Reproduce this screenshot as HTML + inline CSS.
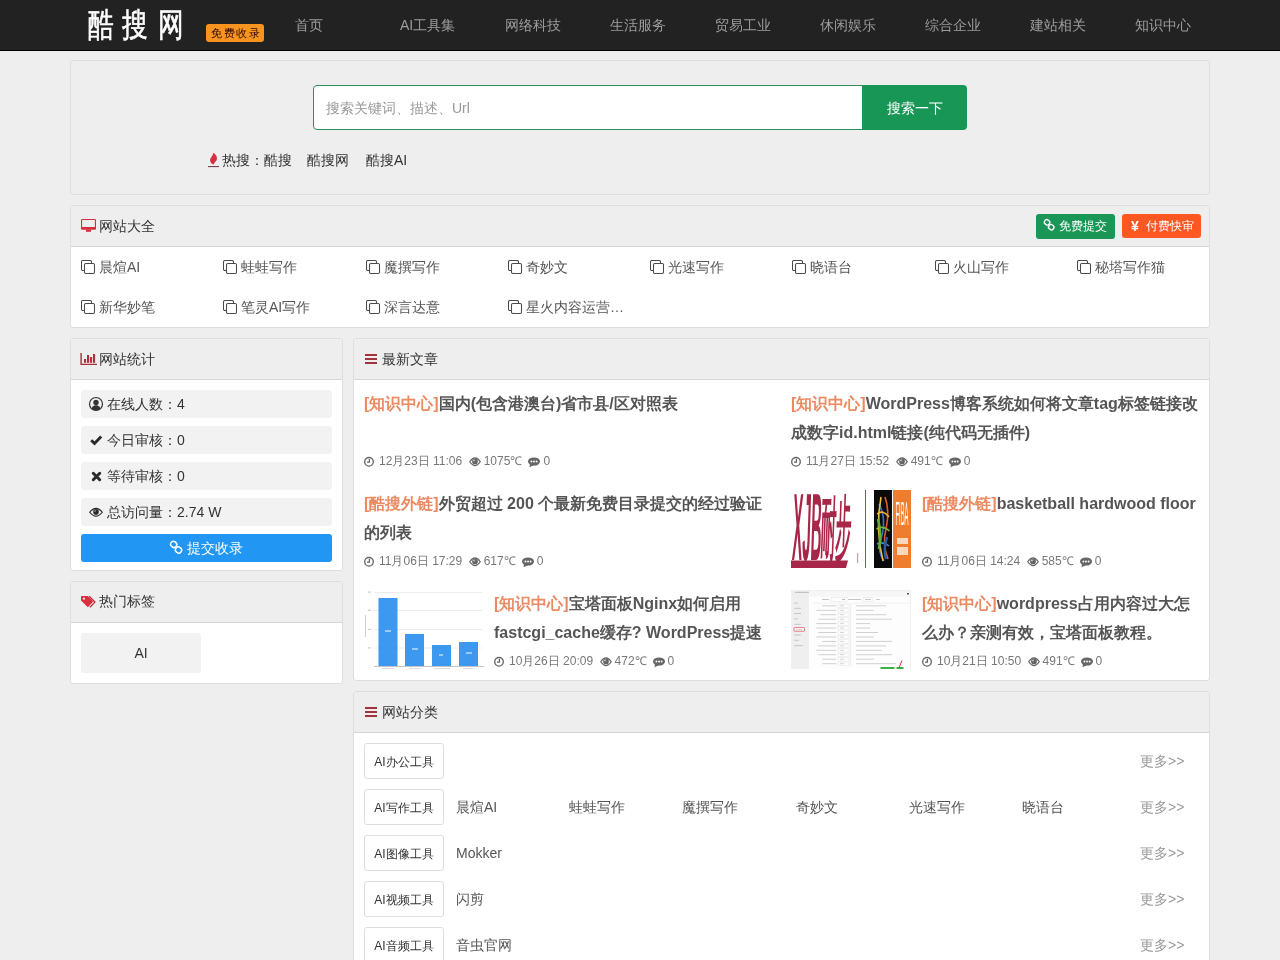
<!DOCTYPE html>
<html><head><meta charset="utf-8">
<style>
*{box-sizing:border-box;margin:0;padding:0}
html,body{width:1280px;height:960px;overflow:hidden}
body{background:#eee;font-family:"Liberation Sans",sans-serif;font-size:14px;color:#555;position:relative}
.a{position:absolute;white-space:nowrap}
.nav{position:absolute;left:0;top:0;width:1280px;height:51px;background:#222;border-bottom:1px solid #000}
.logo{top:4px;font-size:33px;line-height:41px;color:#fff;-webkit-text-stroke:.6px #fff;transform:scaleX(.78);transform-origin:0 0}
.badge{left:206px;top:24px;width:58px;height:18px;background:#f8931f;border-radius:3px;color:#2a0a00;font-size:11px;line-height:18px;padding-left:5px;letter-spacing:1.5px}
.ni{top:15px;line-height:20px;color:#9d9d9d;font-size:14px}
.panel{position:absolute;border:1px solid #ddd;border-radius:3px;background:#fff;overflow:hidden}
.ph{position:absolute;left:0;top:0;right:0;height:41px;background:#eee;border-bottom:1px solid #d6d6d6}
.pt{position:absolute;top:10px;line-height:20px;color:#333;font-size:14px}
.red{color:#d9333f}
.at{font-size:16px;line-height:29px;font-weight:bold;color:#555}
.tg{color:#ec8a62}
.meta{font-size:12px;line-height:20px;color:#777}
.mi{display:inline-block;vertical-align:top}
</style></head><body><div id="wrap" style="position:absolute;left:0;top:0;width:1280px;height:960px;will-change:transform">
<div class="nav"></div>
<div class="a logo" style="left:88px">酷</div><div class="a logo" style="left:122px">搜</div><div class="a logo" style="left:158px">网</div>
<div class="a badge">免费收录</div>
<div class="a ni" style="left:295px">首页</div>
<div class="a ni" style="left:400px">AI工具集</div>
<div class="a ni" style="left:505px">网络科技</div>
<div class="a ni" style="left:610px">生活服务</div>
<div class="a ni" style="left:715px">贸易工业</div>
<div class="a ni" style="left:820px">休闲娱乐</div>
<div class="a ni" style="left:925px">综合企业</div>
<div class="a ni" style="left:1030px">建站相关</div>
<div class="a ni" style="left:1135px">知识中心</div>

<!-- search -->
<div class="panel" style="left:70px;top:60px;width:1140px;height:135px;background:#eee"></div>
<div class="a" style="left:313px;top:85px;width:550px;height:45px;background:#fff;border:1px solid #2f8f5a;border-radius:4px 0 0 4px"></div>
<div class="a" style="left:326px;top:98px;line-height:20px;color:#999">搜索关键词、描述、Url</div>
<div class="a" style="left:862px;top:85px;width:105px;height:45px;background:#189656;border-radius:0 4px 4px 0;color:#fff;text-align:center;line-height:47px">搜索一下</div>
<div class="a" style="left:222px;top:150px;line-height:20px;color:#333">热搜：酷搜</div>
<div class="a" style="left:307px;top:150px;line-height:20px;color:#333">酷搜网</div>
<div class="a" style="left:366px;top:150px;line-height:20px;color:#333">酷搜AI</div>


<!-- site list panel -->
<div class="panel" style="left:70px;top:205px;width:1140px;height:123px"><div class="ph"></div></div>
<svg class="a" style="left:81px;top:219px" width="15" height="13" viewBox="0 0 15 13"><path fill-rule="evenodd" d="M1.2 0H13.8A1.2 1.2 0 0 1 15 1.2V9.5A1.2 1.2 0 0 1 13.8 10.7H1.2A1.2 1.2 0 0 1 0 9.5V1.2A1.2 1.2 0 0 1 1.2 0ZM1.1 1.1V8H13.9V1.1Z" fill="#d42f3f"/><rect x="5" y="10.5" width="5" height="2.3" fill="#d42f3f"/></svg>
<div class="a pt" style="left:99px;top:216px">网站大全</div>
<div class="a" style="left:1036px;top:214px;width:79px;height:25px;background:#1a9656;border-radius:3px;color:#fff;font-size:12px;line-height:25px;padding-left:23px">免费提交</div>
<div class="a" style="left:1122px;top:214px;width:79px;height:24px;background:#ff5722;border-radius:3px;color:#fff;font-size:12px;line-height:24px;padding-left:24px">付费快审</div>
<div class="a" style="left:1131px;top:214px;line-height:24px;color:#fff;font-size:14px;font-weight:bold">¥</div>

<svg class="a" style="left:81px;top:260px" width="15" height="15" viewBox="0 0 15 15"><path d="M3.5 10.5H1.8A1.3 1.3 0 0 1 .5 9.2V1.8A1.3 1.3 0 0 1 1.8 .5H9.2A1.3 1.3 0 0 1 10.5 1.8V3.5" fill="none" stroke="#4a4a4a" stroke-width="1.05"/><rect x="3.5" y="3.5" width="10" height="10" rx="1.3" fill="none" stroke="#4a4a4a" stroke-width="1.05"/></svg>
<div class="a" style="left:99px;top:257px;line-height:20px;color:#555">晨煊AI</div>
<svg class="a" style="left:223px;top:260px" width="15" height="15" viewBox="0 0 15 15"><path d="M3.5 10.5H1.8A1.3 1.3 0 0 1 .5 9.2V1.8A1.3 1.3 0 0 1 1.8 .5H9.2A1.3 1.3 0 0 1 10.5 1.8V3.5" fill="none" stroke="#4a4a4a" stroke-width="1.05"/><rect x="3.5" y="3.5" width="10" height="10" rx="1.3" fill="none" stroke="#4a4a4a" stroke-width="1.05"/></svg>
<div class="a" style="left:241px;top:257px;line-height:20px;color:#555">蛙蛙写作</div>
<svg class="a" style="left:366px;top:260px" width="15" height="15" viewBox="0 0 15 15"><path d="M3.5 10.5H1.8A1.3 1.3 0 0 1 .5 9.2V1.8A1.3 1.3 0 0 1 1.8 .5H9.2A1.3 1.3 0 0 1 10.5 1.8V3.5" fill="none" stroke="#4a4a4a" stroke-width="1.05"/><rect x="3.5" y="3.5" width="10" height="10" rx="1.3" fill="none" stroke="#4a4a4a" stroke-width="1.05"/></svg>
<div class="a" style="left:384px;top:257px;line-height:20px;color:#555">魔撰写作</div>
<svg class="a" style="left:508px;top:260px" width="15" height="15" viewBox="0 0 15 15"><path d="M3.5 10.5H1.8A1.3 1.3 0 0 1 .5 9.2V1.8A1.3 1.3 0 0 1 1.8 .5H9.2A1.3 1.3 0 0 1 10.5 1.8V3.5" fill="none" stroke="#4a4a4a" stroke-width="1.05"/><rect x="3.5" y="3.5" width="10" height="10" rx="1.3" fill="none" stroke="#4a4a4a" stroke-width="1.05"/></svg>
<div class="a" style="left:526px;top:257px;line-height:20px;color:#555">奇妙文</div>
<svg class="a" style="left:650px;top:260px" width="15" height="15" viewBox="0 0 15 15"><path d="M3.5 10.5H1.8A1.3 1.3 0 0 1 .5 9.2V1.8A1.3 1.3 0 0 1 1.8 .5H9.2A1.3 1.3 0 0 1 10.5 1.8V3.5" fill="none" stroke="#4a4a4a" stroke-width="1.05"/><rect x="3.5" y="3.5" width="10" height="10" rx="1.3" fill="none" stroke="#4a4a4a" stroke-width="1.05"/></svg>
<div class="a" style="left:668px;top:257px;line-height:20px;color:#555">光速写作</div>
<svg class="a" style="left:792px;top:260px" width="15" height="15" viewBox="0 0 15 15"><path d="M3.5 10.5H1.8A1.3 1.3 0 0 1 .5 9.2V1.8A1.3 1.3 0 0 1 1.8 .5H9.2A1.3 1.3 0 0 1 10.5 1.8V3.5" fill="none" stroke="#4a4a4a" stroke-width="1.05"/><rect x="3.5" y="3.5" width="10" height="10" rx="1.3" fill="none" stroke="#4a4a4a" stroke-width="1.05"/></svg>
<div class="a" style="left:810px;top:257px;line-height:20px;color:#555">晓语台</div>
<svg class="a" style="left:935px;top:260px" width="15" height="15" viewBox="0 0 15 15"><path d="M3.5 10.5H1.8A1.3 1.3 0 0 1 .5 9.2V1.8A1.3 1.3 0 0 1 1.8 .5H9.2A1.3 1.3 0 0 1 10.5 1.8V3.5" fill="none" stroke="#4a4a4a" stroke-width="1.05"/><rect x="3.5" y="3.5" width="10" height="10" rx="1.3" fill="none" stroke="#4a4a4a" stroke-width="1.05"/></svg>
<div class="a" style="left:953px;top:257px;line-height:20px;color:#555">火山写作</div>
<svg class="a" style="left:1077px;top:260px" width="15" height="15" viewBox="0 0 15 15"><path d="M3.5 10.5H1.8A1.3 1.3 0 0 1 .5 9.2V1.8A1.3 1.3 0 0 1 1.8 .5H9.2A1.3 1.3 0 0 1 10.5 1.8V3.5" fill="none" stroke="#4a4a4a" stroke-width="1.05"/><rect x="3.5" y="3.5" width="10" height="10" rx="1.3" fill="none" stroke="#4a4a4a" stroke-width="1.05"/></svg>
<div class="a" style="left:1095px;top:257px;line-height:20px;color:#555">秘塔写作猫</div>
<svg class="a" style="left:81px;top:300px" width="15" height="15" viewBox="0 0 15 15"><path d="M3.5 10.5H1.8A1.3 1.3 0 0 1 .5 9.2V1.8A1.3 1.3 0 0 1 1.8 .5H9.2A1.3 1.3 0 0 1 10.5 1.8V3.5" fill="none" stroke="#4a4a4a" stroke-width="1.05"/><rect x="3.5" y="3.5" width="10" height="10" rx="1.3" fill="none" stroke="#4a4a4a" stroke-width="1.05"/></svg>
<div class="a" style="left:99px;top:297px;line-height:20px;color:#555">新华妙笔</div>
<svg class="a" style="left:223px;top:300px" width="15" height="15" viewBox="0 0 15 15"><path d="M3.5 10.5H1.8A1.3 1.3 0 0 1 .5 9.2V1.8A1.3 1.3 0 0 1 1.8 .5H9.2A1.3 1.3 0 0 1 10.5 1.8V3.5" fill="none" stroke="#4a4a4a" stroke-width="1.05"/><rect x="3.5" y="3.5" width="10" height="10" rx="1.3" fill="none" stroke="#4a4a4a" stroke-width="1.05"/></svg>
<div class="a" style="left:241px;top:297px;line-height:20px;color:#555">笔灵AI写作</div>
<svg class="a" style="left:366px;top:300px" width="15" height="15" viewBox="0 0 15 15"><path d="M3.5 10.5H1.8A1.3 1.3 0 0 1 .5 9.2V1.8A1.3 1.3 0 0 1 1.8 .5H9.2A1.3 1.3 0 0 1 10.5 1.8V3.5" fill="none" stroke="#4a4a4a" stroke-width="1.05"/><rect x="3.5" y="3.5" width="10" height="10" rx="1.3" fill="none" stroke="#4a4a4a" stroke-width="1.05"/></svg>
<div class="a" style="left:384px;top:297px;line-height:20px;color:#555">深言达意</div>
<svg class="a" style="left:508px;top:300px" width="15" height="15" viewBox="0 0 15 15"><path d="M3.5 10.5H1.8A1.3 1.3 0 0 1 .5 9.2V1.8A1.3 1.3 0 0 1 1.8 .5H9.2A1.3 1.3 0 0 1 10.5 1.8V3.5" fill="none" stroke="#4a4a4a" stroke-width="1.05"/><rect x="3.5" y="3.5" width="10" height="10" rx="1.3" fill="none" stroke="#4a4a4a" stroke-width="1.05"/></svg>
<div class="a" style="left:526px;top:297px;line-height:20px;color:#555">星火内容运营…</div>

<!-- stats panel -->
<div class="panel" style="left:70px;top:338px;width:273px;height:233px"><div class="ph"></div></div>
<div class="a pt" style="left:99px;top:349px">网站统计</div>
<div class="a" style="left:81px;top:390px;width:251px;height:28px;background:#f2f2f2;border-radius:3px"></div>
<div class="a" style="left:81px;top:426px;width:251px;height:28px;background:#f2f2f2;border-radius:3px"></div>
<div class="a" style="left:81px;top:462px;width:251px;height:28px;background:#f2f2f2;border-radius:3px"></div>
<div class="a" style="left:81px;top:498px;width:251px;height:28px;background:#f2f2f2;border-radius:3px"></div>
<div class="a" style="left:107px;top:394px;line-height:20px;color:#333">在线人数：4</div>
<div class="a" style="left:107px;top:430px;line-height:20px;color:#333">今日审核：0</div>
<div class="a" style="left:107px;top:466px;line-height:20px;color:#333">等待审核：0</div>
<div class="a" style="left:107px;top:502px;line-height:20px;color:#333">总访问量：2.74 W</div>
<div class="a" style="left:81px;top:534px;width:251px;height:28px;background:#2196f3;border-radius:3px;color:#fff;line-height:28px;padding-left:106px">提交收录</div>

<!-- tags panel -->
<div class="panel" style="left:70px;top:581px;width:273px;height:103px"><div class="ph"></div></div>
<div class="a pt" style="left:99px;top:591px">热门标签</div>
<div class="a" style="left:81px;top:633px;width:120px;height:40px;background:#f2f2f2;border-radius:3px;text-align:center;line-height:40px;color:#333">AI</div>

<!-- articles panel -->
<div class="panel" style="left:353px;top:338px;width:857px;height:343px"><div class="ph"></div></div>
<div class="a pt" style="left:382px;top:349px">最新文章</div>


<div class="a at" style="left:364px;top:389px"><span class="tg">[知识中心]</span>国内(包含港澳台)省市县/区对照表</div>
<div class="a meta" style="left:364px;top:451px"><svg class="mi" width="10" height="20" viewBox="0 0 10 20" style="margin-right:5px"><circle cx="5" cy="10.75" r="4.3" fill="none" stroke="#666" stroke-width="1.35"/><path d="M5.4 8V11.2H3" fill="none" stroke="#666" stroke-width="1.3"/></svg>12月23日 11:06<svg class="mi" width="12" height="20" viewBox="0 0 12 20" style="margin-left:6.5px;margin-right:3px"><path d="M.7 10.75Q6 3 11.3 10.75Q6 18.5 .7 10.75Z" fill="none" stroke="#666" stroke-width="1.2"/><circle cx="6" cy="10.4" r="2.9" fill="#666"/><circle cx="5" cy="9.4" r=".9" fill="#ccc"/></svg>1075℃<svg class="mi" width="12" height="20" viewBox="0 0 12 20" style="margin-left:6px;margin-right:3px"><ellipse cx="6" cy="10.5" rx="6" ry="4.1" fill="#666"/><path d="M2 13L1.5 16.3L5.8 14.3Z" fill="#666"/><circle cx="3.4" cy="10.5" r=".95" fill="#fff"/><circle cx="6" cy="10.5" r=".95" fill="#fff"/><circle cx="8.6" cy="10.5" r=".95" fill="#fff"/></svg>0</div>
<div class="a at" style="left:791px;top:389px"><span class="tg">[知识中心]</span>WordPress博客系统如何将文章tag标签链接改<br>成数字id.html链接(纯代码无插件)</div>
<div class="a meta" style="left:791px;top:451px"><svg class="mi" width="10" height="20" viewBox="0 0 10 20" style="margin-right:5px"><circle cx="5" cy="10.75" r="4.3" fill="none" stroke="#666" stroke-width="1.35"/><path d="M5.4 8V11.2H3" fill="none" stroke="#666" stroke-width="1.3"/></svg>11月27日 15:52<svg class="mi" width="12" height="20" viewBox="0 0 12 20" style="margin-left:6.5px;margin-right:3px"><path d="M.7 10.75Q6 3 11.3 10.75Q6 18.5 .7 10.75Z" fill="none" stroke="#666" stroke-width="1.2"/><circle cx="6" cy="10.4" r="2.9" fill="#666"/><circle cx="5" cy="9.4" r=".9" fill="#ccc"/></svg>491℃<svg class="mi" width="12" height="20" viewBox="0 0 12 20" style="margin-left:6px;margin-right:3px"><ellipse cx="6" cy="10.5" rx="6" ry="4.1" fill="#666"/><path d="M2 13L1.5 16.3L5.8 14.3Z" fill="#666"/><circle cx="3.4" cy="10.5" r=".95" fill="#fff"/><circle cx="6" cy="10.5" r=".95" fill="#fff"/><circle cx="8.6" cy="10.5" r=".95" fill="#fff"/></svg>0</div>
<div class="a at" style="left:364px;top:489px"><span class="tg">[酷搜外链]</span>外贸超过 200 个最新免费目录提交的经过验证<br>的列表</div>
<div class="a meta" style="left:364px;top:551px"><svg class="mi" width="10" height="20" viewBox="0 0 10 20" style="margin-right:5px"><circle cx="5" cy="10.75" r="4.3" fill="none" stroke="#666" stroke-width="1.35"/><path d="M5.4 8V11.2H3" fill="none" stroke="#666" stroke-width="1.3"/></svg>11月06日 17:29<svg class="mi" width="12" height="20" viewBox="0 0 12 20" style="margin-left:6.5px;margin-right:3px"><path d="M.7 10.75Q6 3 11.3 10.75Q6 18.5 .7 10.75Z" fill="none" stroke="#666" stroke-width="1.2"/><circle cx="6" cy="10.4" r="2.9" fill="#666"/><circle cx="5" cy="9.4" r=".9" fill="#ccc"/></svg>617℃<svg class="mi" width="12" height="20" viewBox="0 0 12 20" style="margin-left:6px;margin-right:3px"><ellipse cx="6" cy="10.5" rx="6" ry="4.1" fill="#666"/><path d="M2 13L1.5 16.3L5.8 14.3Z" fill="#666"/><circle cx="3.4" cy="10.5" r=".95" fill="#fff"/><circle cx="6" cy="10.5" r=".95" fill="#fff"/><circle cx="8.6" cy="10.5" r=".95" fill="#fff"/></svg>0</div>
<svg class="a" style="left:791px;top:489px" width="120" height="80" viewBox="0 0 120 80">
<rect width="120" height="80" fill="#fff"/>
<g fill="#a82748">
<text x="3" y="21.6" transform="scale(1,3.3) skewX(-6)" font-family="Liberation Sans" font-weight="bold" font-size="29" textLength="29" lengthAdjust="spacingAndGlyphs">XJB</text>
<text x="31" y="21.6" transform="scale(1,2.9) skewX(-6)" font-family="Liberation Sans" font-weight="bold" font-size="24" textLength="31" lengthAdjust="spacingAndGlyphs">耐步</text>
<path d="M0 71.5H57L55 79H0Z"/>
</g>
<rect x="74" y="1" width="1" height="78" fill="#9a4a5a"/>
<rect x="66" y="64" width="1.2" height="10" fill="#c8a0aa"/>
<rect x="83" y="1" width="18" height="78" fill="#0a0a0a"/>
<rect x="102" y="1" width="18" height="78" fill="#ef7d2d"/>
<g fill="none" stroke-width="1.6">
<path d="M88 15Q96 30 90 50Q86 62 93 72" stroke="#3a70c0"/>
<path d="M94 8Q99 22 95 40Q91 55 97 70" stroke="#e05a30"/>
<path d="M86 25Q92 20 98 28" stroke="#f0b030"/>
<path d="M85.5 40Q92 36 98.5 42" stroke="#70b840"/>
<path d="M86 55Q92 52 98 57" stroke="#3a8ad0"/>
<path d="M90 8Q84 40 92 72" stroke="#e8c040"/>
<path d="M87 30Q91 45 88 60" stroke="#60b040" stroke-width="2.5"/>
<path d="M96 48Q92 60 95 70" stroke="#2a5aa0" stroke-width="2.5"/>
</g>
<g fill="#fff">
<text x="104.5" y="9" transform="scale(1,4)" font-family="Liberation Sans" font-size="8.5" textLength="13" lengthAdjust="spacingAndGlyphs">FIBA</text>
<rect x="106" y="49" width="11" height="6" fill-opacity=".7"/><rect x="106" y="58" width="11" height="8" fill-opacity=".7"/>
</g>
</svg>
<div class="a at" style="left:922px;top:489px"><span class="tg">[酷搜外链]</span>basketball hardwood floor</div>
<div class="a meta" style="left:922px;top:551px"><svg class="mi" width="10" height="20" viewBox="0 0 10 20" style="margin-right:5px"><circle cx="5" cy="10.75" r="4.3" fill="none" stroke="#666" stroke-width="1.35"/><path d="M5.4 8V11.2H3" fill="none" stroke="#666" stroke-width="1.3"/></svg>11月06日 14:24<svg class="mi" width="12" height="20" viewBox="0 0 12 20" style="margin-left:6.5px;margin-right:3px"><path d="M.7 10.75Q6 3 11.3 10.75Q6 18.5 .7 10.75Z" fill="none" stroke="#666" stroke-width="1.2"/><circle cx="6" cy="10.4" r="2.9" fill="#666"/><circle cx="5" cy="9.4" r=".9" fill="#ccc"/></svg>585℃<svg class="mi" width="12" height="20" viewBox="0 0 12 20" style="margin-left:6px;margin-right:3px"><ellipse cx="6" cy="10.5" rx="6" ry="4.1" fill="#666"/><path d="M2 13L1.5 16.3L5.8 14.3Z" fill="#666"/><circle cx="3.4" cy="10.5" r=".95" fill="#fff"/><circle cx="6" cy="10.5" r=".95" fill="#fff"/><circle cx="8.6" cy="10.5" r=".95" fill="#fff"/></svg>0</div>
<svg class="a" style="left:364px;top:589px" width="120" height="80" viewBox="0 0 120 80">
<rect width="120" height="80" fill="#fff"/>
<g stroke="#ededed" stroke-width="1"><path d="M10 3.5H118M10 21.5H118M10 40.5H118M10 59H118"/></g>
<g fill="#d0d0d0"><rect x="4" y="2.5" width="3" height="1.2"/><rect x="4" y="20.8" width="3" height="1.2"/><rect x="4" y="39.8" width="3" height="1.2"/><rect x="4" y="58.3" width="3" height="1.2"/><rect x="1" y="26" width="1" height="22"/></g>
<g fill="#3d98f0"><rect x="14.5" y="9" width="19" height="68.5"/><rect x="41" y="45" width="19" height="32.5"/><rect x="68" y="56" width="19" height="21.5"/><rect x="95" y="53" width="19" height="24.5"/></g>
<g fill="#9ccaf8"><rect x="21" y="41" width="6" height="2"/><rect x="48" y="59" width="6" height="2"/><rect x="75" y="65" width="4" height="2"/><rect x="102" y="63" width="6" height="2"/></g>
<rect x="10" y="77" width="110" height="1" fill="#c4c4c4"/>
<g fill="#dcdcdc"><rect x="18" y="79" width="12" height="1"/><rect x="45" y="79" width="12" height="1"/><rect x="70" y="79" width="16" height="1"/><rect x="99" y="79" width="10" height="1"/></g>
</svg>
<div class="a at" style="left:494px;top:589px"><span class="tg">[知识中心]</span>宝塔面板Nginx如何启用<br>fastcgi_cache缓存? WordPress提速</div>
<div class="a meta" style="left:494px;top:651px"><svg class="mi" width="10" height="20" viewBox="0 0 10 20" style="margin-right:5px"><circle cx="5" cy="10.75" r="4.3" fill="none" stroke="#666" stroke-width="1.35"/><path d="M5.4 8V11.2H3" fill="none" stroke="#666" stroke-width="1.3"/></svg>10月26日 20:09<svg class="mi" width="12" height="20" viewBox="0 0 12 20" style="margin-left:6.5px;margin-right:3px"><path d="M.7 10.75Q6 3 11.3 10.75Q6 18.5 .7 10.75Z" fill="none" stroke="#666" stroke-width="1.2"/><circle cx="6" cy="10.4" r="2.9" fill="#666"/><circle cx="5" cy="9.4" r=".9" fill="#ccc"/></svg>472℃<svg class="mi" width="12" height="20" viewBox="0 0 12 20" style="margin-left:6px;margin-right:3px"><ellipse cx="6" cy="10.5" rx="6" ry="4.1" fill="#666"/><path d="M2 13L1.5 16.3L5.8 14.3Z" fill="#666"/><circle cx="3.4" cy="10.5" r=".95" fill="#fff"/><circle cx="6" cy="10.5" r=".95" fill="#fff"/><circle cx="8.6" cy="10.5" r=".95" fill="#fff"/></svg>0</div>
<svg class="a" style="left:791px;top:589px" width="120" height="80" viewBox="0 0 120 80">
<rect width="120" height="80" fill="#fff"/>
<rect x="0.5" y="1" width="119" height="79" fill="#fdfdfd"/>
<rect x="0.5" y="1" width="119" height=".6" fill="#e6e6e6"/>
<rect x="119" y="1" width=".8" height="79" fill="#ececec"/>
<rect x="0" y="1" width="18" height="79" fill="#efefef"/>
<rect x="18" y="1.6" width="101" height="6" fill="#f6f6f6"/>
<rect x="4" y="2.8" width="14" height="1.1" fill="#bdbdbd"/>
<g fill="#c6c6c6"><rect x="3" y="13.5" width="4" height="1"/><rect x="3" y="18.8" width="7" height="1"/><rect x="3" y="24" width="7" height="1"/><rect x="3" y="29.4" width="4" height="1"/><rect x="3" y="34.8" width="7" height="1"/><rect x="3" y="45.5" width="7" height="1"/><rect x="3" y="50.8" width="5" height="1"/><rect x="3" y="56.2" width="9" height="1"/></g>
<rect x="3" y="38.6" width="10.5" height="3.6" rx=".8" fill="#fff" stroke="#d8505a" stroke-width=".8"/>
<rect x="5" y="40" width="6" height=".8" fill="#c8c8c8"/>
<rect x="31" y="10" width="7" height="1" fill="#c4c4c4"/><rect x="40" y="8.4" width="16" height="4" fill="none" stroke="#e0e0e0" stroke-width=".5"/><rect x="51" y="10" width="3" height="1" fill="#bbb"/><rect x="57" y="10" width="13" height="1" fill="#c4c4c4"/><rect x="72" y="8.4" width="10" height="4" fill="none" stroke="#e0e0e0" stroke-width=".5"/><rect x="74" y="10" width="6" height="1" fill="#c8c8c8"/><rect x="85" y="10" width="4" height="1" fill="#c8c8c8"/>
<rect x="22" y="13.8" width="97" height=".5" fill="#e8e8e8"/>
<rect x="59.5" y="15" width=".6" height="62" fill="#e2e2e2"/>
<rect x="31.3" y="16.3" width="14" height="1" fill="#cfcfcf"/><rect x="47" y="15.2" width="11" height="3.4" fill="none" stroke="#e4e4e4" stroke-width=".5"/><rect x="49" y="16.3" width="4" height="1" fill="#d5d5d5"/><rect x="65" y="16.3" width="30" height="1" fill="#d0d0d0"/><rect x="25.3" y="20.8" width="20" height="1" fill="#cfcfcf"/><rect x="47" y="19.6" width="11" height="3.4" fill="none" stroke="#e4e4e4" stroke-width=".5"/><rect x="49" y="20.8" width="4" height="1" fill="#d5d5d5"/><rect x="65" y="20.8" width="18" height="1" fill="#d0d0d0"/><rect x="29.3" y="25.2" width="16" height="1" fill="#cfcfcf"/><rect x="47" y="24.1" width="11" height="3.4" fill="none" stroke="#e4e4e4" stroke-width=".5"/><rect x="49" y="25.2" width="4" height="1" fill="#d5d5d5"/><rect x="65" y="25.2" width="30" height="1" fill="#d0d0d0"/><rect x="27.3" y="29.7" width="18" height="1" fill="#cfcfcf"/><rect x="47" y="28.6" width="11" height="3.4" fill="none" stroke="#e4e4e4" stroke-width=".5"/><rect x="49" y="29.7" width="4" height="1" fill="#d5d5d5"/><rect x="65" y="29.7" width="36" height="1" fill="#d0d0d0"/><rect x="25.3" y="34.1" width="20" height="1" fill="#cfcfcf"/><rect x="47" y="33.0" width="11" height="3.4" fill="none" stroke="#e4e4e4" stroke-width=".5"/><rect x="49" y="34.1" width="4" height="1" fill="#d5d5d5"/><rect x="65" y="34.1" width="14" height="1" fill="#d0d0d0"/><rect x="25.3" y="38.5" width="20" height="1" fill="#cfcfcf"/><rect x="47" y="37.4" width="11" height="3.4" fill="none" stroke="#e4e4e4" stroke-width=".5"/><rect x="49" y="38.5" width="4" height="1" fill="#d5d5d5"/><rect x="65" y="38.5" width="14" height="1" fill="#d0d0d0"/><rect x="27.3" y="43.0" width="18" height="1" fill="#cfcfcf"/><rect x="47" y="41.9" width="11" height="3.4" fill="none" stroke="#e4e4e4" stroke-width=".5"/><rect x="49" y="43.0" width="4" height="1" fill="#d5d5d5"/><rect x="65" y="43.0" width="22" height="1" fill="#d0d0d0"/><rect x="25.3" y="47.5" width="20" height="1" fill="#cfcfcf"/><rect x="47" y="46.4" width="11" height="3.4" fill="none" stroke="#e4e4e4" stroke-width=".5"/><rect x="49" y="47.5" width="4" height="1" fill="#d5d5d5"/><rect x="65" y="47.5" width="18" height="1" fill="#d0d0d0"/><rect x="31.3" y="51.9" width="14" height="1" fill="#cfcfcf"/><rect x="47" y="50.8" width="11" height="3.4" fill="none" stroke="#e4e4e4" stroke-width=".5"/><rect x="49" y="51.9" width="4" height="1" fill="#d5d5d5"/><rect x="65" y="51.9" width="36" height="1" fill="#d0d0d0"/><rect x="27.3" y="56.4" width="18" height="1" fill="#cfcfcf"/><rect x="47" y="55.3" width="11" height="3.4" fill="none" stroke="#e4e4e4" stroke-width=".5"/><rect x="49" y="56.4" width="4" height="1" fill="#d5d5d5"/><rect x="65" y="56.4" width="30" height="1" fill="#d0d0d0"/><rect x="25.3" y="60.8" width="20" height="1" fill="#cfcfcf"/><rect x="47" y="59.7" width="11" height="3.4" fill="none" stroke="#e4e4e4" stroke-width=".5"/><rect x="49" y="60.8" width="4" height="1" fill="#d5d5d5"/><rect x="65" y="60.8" width="26" height="1" fill="#d0d0d0"/><rect x="27.3" y="65.2" width="18" height="1" fill="#cfcfcf"/><rect x="47" y="64.2" width="11" height="3.4" fill="none" stroke="#e4e4e4" stroke-width=".5"/><rect x="49" y="65.2" width="4" height="1" fill="#d5d5d5"/><rect x="65" y="65.2" width="36" height="1" fill="#d0d0d0"/><rect x="31.3" y="69.7" width="14" height="1" fill="#cfcfcf"/><rect x="47" y="68.6" width="11" height="3.4" fill="none" stroke="#e4e4e4" stroke-width=".5"/><rect x="49" y="69.7" width="4" height="1" fill="#d5d5d5"/><rect x="65" y="69.7" width="18" height="1" fill="#d0d0d0"/><rect x="31.3" y="74.2" width="14" height="1" fill="#cfcfcf"/><rect x="47" y="73.1" width="11" height="3.4" fill="none" stroke="#e4e4e4" stroke-width=".5"/><rect x="49" y="74.2" width="4" height="1" fill="#d5d5d5"/><rect x="65" y="74.2" width="40" height="1" fill="#d0d0d0"/>
<rect x="89.5" y="78" width="14" height="2" fill="#3cb043"/><rect x="105.5" y="78" width="7" height="2" fill="#3cb043"/>
<path d="M108 79L111 71.5" stroke="#d8303a" stroke-width="1"/>
<rect x="116" y="4" width="2" height="1.5" fill="#555"/>
</svg>
<div class="a at" style="left:922px;top:589px"><span class="tg">[知识中心]</span>wordpress占用内容过大怎<br>么办？亲测有效，宝塔面板教程。</div>
<div class="a meta" style="left:922px;top:651px"><svg class="mi" width="10" height="20" viewBox="0 0 10 20" style="margin-right:5px"><circle cx="5" cy="10.75" r="4.3" fill="none" stroke="#666" stroke-width="1.35"/><path d="M5.4 8V11.2H3" fill="none" stroke="#666" stroke-width="1.3"/></svg>10月21日 10:50<svg class="mi" width="12" height="20" viewBox="0 0 12 20" style="margin-left:6.5px;margin-right:3px"><path d="M.7 10.75Q6 3 11.3 10.75Q6 18.5 .7 10.75Z" fill="none" stroke="#666" stroke-width="1.2"/><circle cx="6" cy="10.4" r="2.9" fill="#666"/><circle cx="5" cy="9.4" r=".9" fill="#ccc"/></svg>491℃<svg class="mi" width="12" height="20" viewBox="0 0 12 20" style="margin-left:6px;margin-right:3px"><ellipse cx="6" cy="10.5" rx="6" ry="4.1" fill="#666"/><path d="M2 13L1.5 16.3L5.8 14.3Z" fill="#666"/><circle cx="3.4" cy="10.5" r=".95" fill="#fff"/><circle cx="6" cy="10.5" r=".95" fill="#fff"/><circle cx="8.6" cy="10.5" r=".95" fill="#fff"/></svg>0</div>

<!-- categories panel -->
<div class="panel" style="left:353px;top:691px;width:857px;height:300px"><div class="ph"></div></div>
<div class="a pt" style="left:382px;top:702px">网站分类</div>

<div class="a" style="left:364px;top:743px;width:80px;height:36px;border:1px solid #ddd;border-radius:3px;background:#fff;font-size:12px;line-height:34px;padding-top:1px;text-align:center;color:#333">AI办公工具</div>
<div class="a" style="left:1140px;top:751px;line-height:20px;color:#999">更多&gt;&gt;</div>
<div class="a" style="left:364px;top:789px;width:80px;height:36px;border:1px solid #ddd;border-radius:3px;background:#fff;font-size:12px;line-height:34px;padding-top:1px;text-align:center;color:#333">AI写作工具</div>
<div class="a" style="left:456px;top:797px;line-height:20px;color:#555">晨煊AI</div>
<div class="a" style="left:569px;top:797px;line-height:20px;color:#555">蛙蛙写作</div>
<div class="a" style="left:682px;top:797px;line-height:20px;color:#555">魔撰写作</div>
<div class="a" style="left:796px;top:797px;line-height:20px;color:#555">奇妙文</div>
<div class="a" style="left:909px;top:797px;line-height:20px;color:#555">光速写作</div>
<div class="a" style="left:1022px;top:797px;line-height:20px;color:#555">晓语台</div>
<div class="a" style="left:1140px;top:797px;line-height:20px;color:#999">更多&gt;&gt;</div>
<div class="a" style="left:364px;top:835px;width:80px;height:36px;border:1px solid #ddd;border-radius:3px;background:#fff;font-size:12px;line-height:34px;padding-top:1px;text-align:center;color:#333">AI图像工具</div>
<div class="a" style="left:456px;top:843px;line-height:20px;color:#555">Mokker</div>
<div class="a" style="left:1140px;top:843px;line-height:20px;color:#999">更多&gt;&gt;</div>
<div class="a" style="left:364px;top:881px;width:80px;height:36px;border:1px solid #ddd;border-radius:3px;background:#fff;font-size:12px;line-height:34px;padding-top:1px;text-align:center;color:#333">AI视频工具</div>
<div class="a" style="left:456px;top:889px;line-height:20px;color:#555">闪剪</div>
<div class="a" style="left:1140px;top:889px;line-height:20px;color:#999">更多&gt;&gt;</div>
<div class="a" style="left:364px;top:927px;width:80px;height:36px;border:1px solid #ddd;border-radius:3px;background:#fff;font-size:12px;line-height:34px;padding-top:1px;text-align:center;color:#333">AI音频工具</div>
<div class="a" style="left:456px;top:935px;line-height:20px;color:#555">音虫官网</div>
<div class="a" style="left:1140px;top:935px;line-height:20px;color:#999">更多&gt;&gt;</div>
<!-- header icons -->
<svg class="a" style="left:80px;top:352px" width="18" height="14" viewBox="0 0 18 14"><path d="M1.1 1V12.4H17" fill="none" stroke="#a8303d" stroke-width="1.4"/><rect x="4" y="7" width="2.1" height="3.8" fill="#b0303d"/><rect x="7" y="3" width="2.1" height="7.8" fill="#a8303d"/><rect x="10" y="5" width="2.1" height="5.8" fill="#b8303d"/><rect x="13" y="2" width="2.1" height="8.8" fill="#a8303d"/></svg>
<svg class="a" style="left:364px;top:352px" width="14" height="14" viewBox="0 0 14 14"><rect x="1" y="2" width="12" height="2" fill="#a3323f"/><rect x="1" y="6" width="12" height="2" fill="#a3323f"/><rect x="1" y="10" width="12" height="2" fill="#a3323f"/></svg>
<svg class="a" style="left:364px;top:705px" width="14" height="14" viewBox="0 0 14 14"><rect x="1" y="2" width="12" height="2" fill="#a3323f"/><rect x="1" y="6" width="12" height="2" fill="#a3323f"/><rect x="1" y="10" width="12" height="2" fill="#a3323f"/></svg>
<svg class="a" style="left:80px;top:594px" width="17" height="16" viewBox="0 0 17 16"><path fill-rule="evenodd" d="M1.8 2H7.8L13.2 7.6L7.9 13.2L1 6.4V2.8Q1 2 1.8 2ZM3.9 3.5A1.1 1.1 0 1 0 3.91 3.5Z" fill="#d8303f"/><path d="M9.2 2.3L14.9 8.1L9.9 13.3" fill="none" stroke="#c02e3a" stroke-width="1.3"/></svg>
<!-- stats icons -->
<svg class="a" style="left:88px;top:396px" width="16" height="16" viewBox="0 0 16 16"><defs><clipPath id="cc"><circle cx="8" cy="8" r="6.3"/></clipPath></defs><circle cx="8" cy="8" r="6.5" fill="none" stroke="#333" stroke-width="1.2"/><circle cx="8" cy="6.5" r="2.7" fill="#333"/><g clip-path="url(#cc)"><ellipse cx="8" cy="13.5" rx="4.6" ry="4.3" fill="#333"/></g></svg>
<svg class="a" style="left:89px;top:434px" width="14" height="12" viewBox="0 0 14 12"><path d="M2.2 6.3L5.5 9.4L12.2 2.6" fill="none" stroke="#2a2a2a" stroke-width="2.9" stroke-linejoin="miter"/></svg>
<svg class="a" style="left:91px;top:471px" width="11" height="11" viewBox="0 0 11 11"><path d="M2.3 2.3L8.7 8.7M8.7 2.3L2.3 8.7" stroke="#2a2a2a" stroke-width="3" stroke-linecap="round"/></svg>
<svg class="a" style="left:89px;top:506px" width="14" height="12" viewBox="0 0 14 12"><path d="M.7 6.25Q7 -1.6 13.3 6.25Q7 14.1 .7 6.25Z" fill="none" stroke="#2a2a2a" stroke-width="1.15"/><circle cx="7" cy="5.9" r="2.8" fill="#2a2a2a"/><circle cx="6.1" cy="5" r=".8" fill="#bbb"/></svg>
<!-- link icons -->
<svg class="a" style="left:169px;top:540px" width="15" height="15" viewBox="0 0 15 15"><rect x="1.6" y="1.6" width="6.2" height="5.6" rx="2.6" transform="rotate(40 4.7 4.4)" fill="none" stroke="#fff" stroke-width="1.5"/><rect x="6.4" y="7.2" width="6.2" height="5.6" rx="2.6" transform="rotate(40 9.5 10)" fill="none" stroke="#fff" stroke-width="1.5"/></svg>
<svg class="a" style="left:1043px;top:218px" width="13" height="14" viewBox="0 0 15 15"><rect x="1.6" y="1.6" width="6.2" height="5.6" rx="2.6" transform="rotate(40 4.7 4.4)" fill="none" stroke="#fff" stroke-width="1.6"/><rect x="6.4" y="7.2" width="6.2" height="5.6" rx="2.6" transform="rotate(40 9.5 10)" fill="none" stroke="#fff" stroke-width="1.6"/></svg>
<!-- flame -->
<svg class="a" style="left:207px;top:151px" width="13" height="17" viewBox="0 0 13 17"><path d="M6.2 1.8C8.6 3.4 10.4 5.4 9.9 8.2C9.5 10.4 7.2 11.2 6.6 13.6C4.6 12.8 3 11.4 3.1 9C3.2 6.4 6.3 5 6.2 1.8Z" fill="#d4303f"/><rect x="1" y="15" width="11" height="1.1" fill="#734050"/></svg>

</div></body></html>
